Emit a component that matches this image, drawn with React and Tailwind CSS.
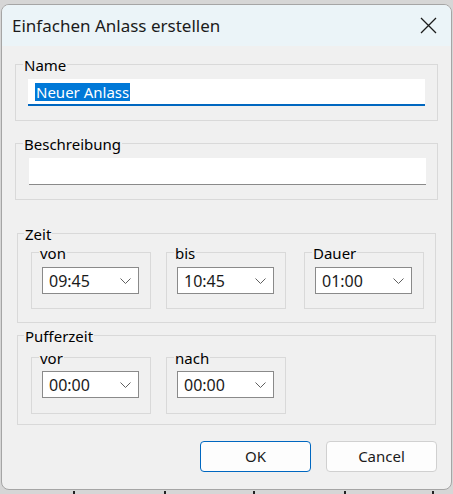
import React from "react";

const font = { fontFamily: '"Noto Sans", "Liberation Sans", sans-serif' };

function Chevron() {
  return (
    <svg width="11" height="6" viewBox="0 0 11 6" className="shrink-0">
      <path d="M0.5 0.5 L5.5 5.5 L10.5 0.5" fill="none" stroke="#5f5f5f" strokeWidth="1" />
    </svg>
  );
}

function Combo({ value }) {
  return (
    <div className="w-[97px] h-[27px] bg-white border border-[#8a8a8a] flex items-center justify-between pl-[6px] pr-[7px]">
      <span className="text-[16px] text-[#1a1a1a] leading-none">{value}</span>
      <Chevron />
    </div>
  );
}

function Legend({ children, left = "left-[7px]" }) {
  return (
    <span className={`absolute ${left} top-[-9px] px-[1px] bg-[#f0f0f0] text-[15px] leading-[18px] text-black`}>
      {children}
    </span>
  );
}

function SubBox({ label, value, className = "", pt = "pt-[14px]" }) {
  return (
    <div className={`relative w-[120px] h-[57px] border border-[#d9d9d9] pl-[10px] ${pt} ${className}`}>
      <Legend>{label}</Legend>
      <Combo value={value} />
    </div>
  );
}

export default function App() {
  return (
    <div className="relative w-[453px] h-[494px] bg-[#d6d6d6] pt-[4px] pl-[1px] overflow-hidden" style={font}>
      {[73, 164, 253, 344, 432].map((x) => (
        <div key={x} className="absolute bottom-0 w-[2px] h-[3px] bg-[#222]" style={{ left: x }} />
      ))}
      <div className="w-[451px] h-[486px] rounded-[8px] border border-[#a5a5a5] bg-[#f0f0f0] overflow-hidden flex flex-col">
        <div className="h-[41px] bg-[#ebf4f8] flex items-center justify-between pl-[10px] pr-[14px] shrink-0">
          <span className="text-[17px] text-[#1b1b1b] leading-none">Einfachen Anlass erstellen</span>
          <svg width="17" height="17" viewBox="0 0 17 17">
            <path d="M1 1 L16 16 M16 1 L1 16" stroke="#1b1b1b" strokeWidth="1.3" fill="none" />
          </svg>
        </div>

        <div className="px-[13px] flex flex-col">
          <div className="relative mt-[18px] h-[57px] border border-[#d9d9d9] pt-[14px] pl-[12px] pr-[12px]">
            <Legend>Name</Legend>
            <div className="h-[27px] bg-white border-b-2 border-[#0067c0] flex items-center pl-[7px]">
              <span className="bg-[#0078d7] text-white text-[15px] leading-[18px] px-[1px]">Neuer Anlass</span>
            </div>
          </div>

          <div className="relative mt-[22px] h-[57px] border border-[#d9d9d9] pt-[14px] pl-[13px] pr-[11px]">
            <Legend>Beschreibung</Legend>
            <div className="h-[27px] bg-white border-b border-[#8a8a8a]" />
          </div>

          <div className="relative mx-[2px] mt-[33px] h-[90px] border border-[#d9d9d9] pt-[18px] pl-[13px] flex items-start">
            <Legend left="left-[6px]">Zeit</Legend>
            <SubBox label="von" value="09:45" />
            <SubBox label="bis" value="10:45" className="ml-[15px] w-[119px]" />
            <SubBox label="Dauer" value="01:00" className="ml-[18px] w-[119px]" />
          </div>

          <div className="relative mx-[2px] mt-[12px] h-[90px] border border-[#d9d9d9] pt-[21px] pl-[13px] flex items-start">
            <Legend left="left-[6px]">Pufferzeit</Legend>
            <SubBox label="vor" value="00:00" pt="pt-[13px]" />
            <SubBox label="nach" value="00:00" pt="pt-[13px]" className="ml-[15px] w-[119px]" />
          </div>

          <div className="mt-[16px] flex justify-end gap-[15px] pr-[1px]">
            <button className="w-[111px] h-[31px] rounded-[4px] border border-[#0067c0] bg-[#fdfdfd] text-[15px] text-[#1b1b1b]">
              OK
            </button>
            <button className="w-[111px] h-[31px] rounded-[4px] border border-[#d0d0d0] bg-[#fdfdfd] text-[15px] text-[#1b1b1b]">
              Cancel
            </button>
          </div>
        </div>
      </div>
    </div>
  );
}
